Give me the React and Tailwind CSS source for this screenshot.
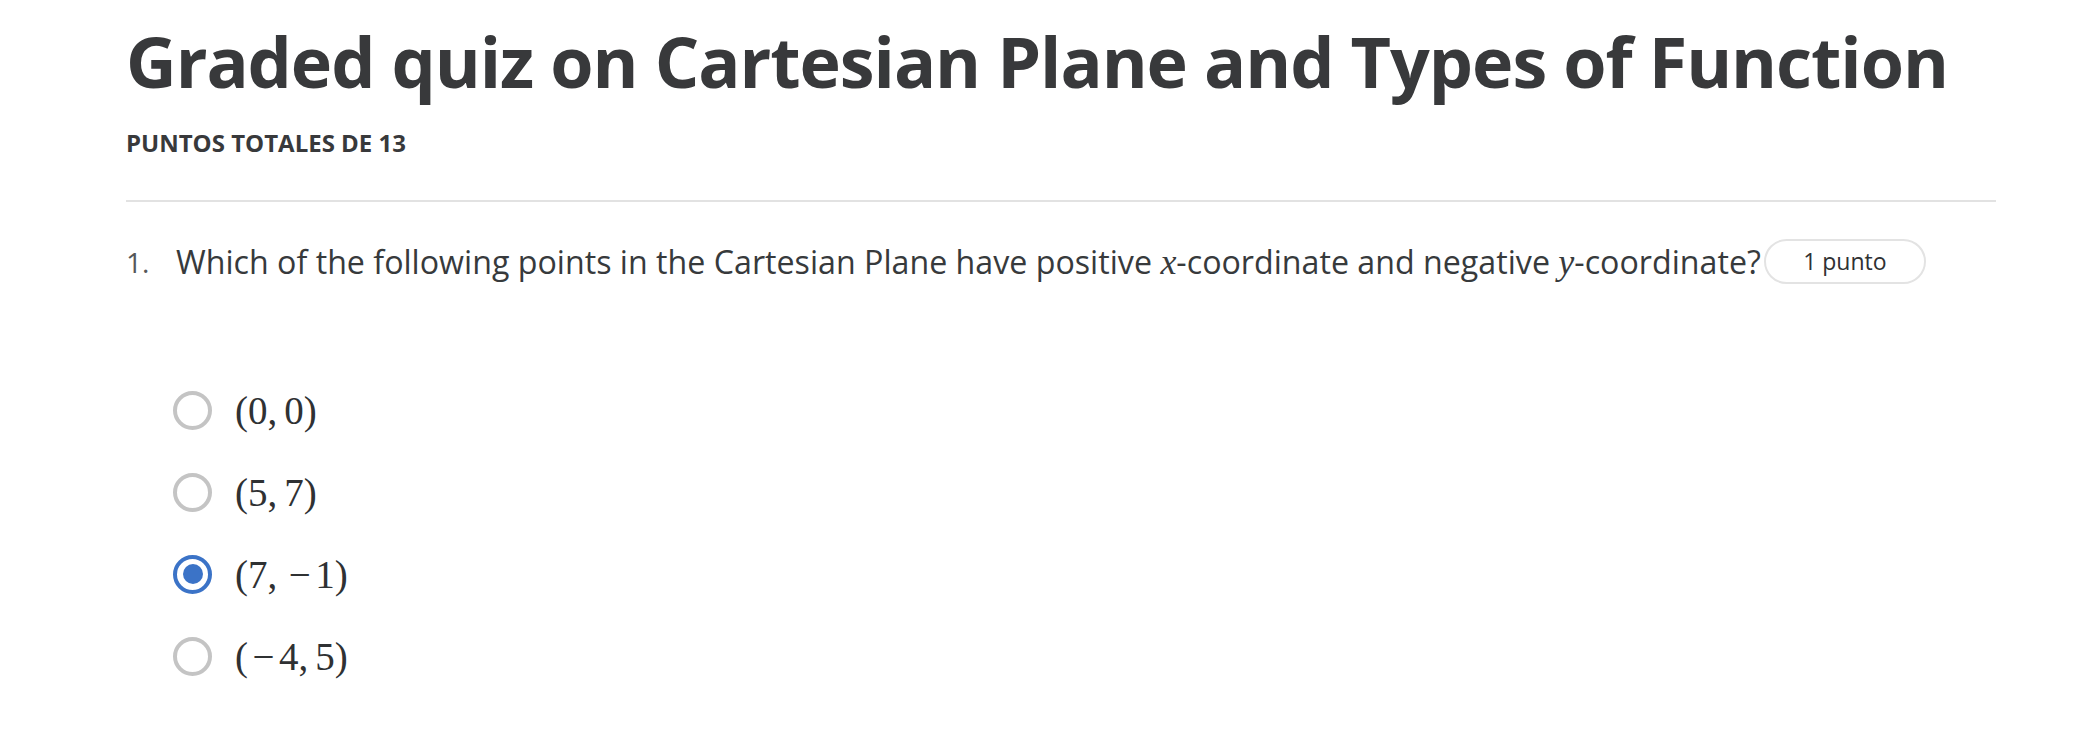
import React from "react";

const options = [
    { id: "a", a: "0", b: "0", selected: false },
    { id: "b", a: "5", b: "7", selected: false },
    { id: "c", a: "7", b: "-1", selected: true },
    { id: "d", a: "-4", b: "5", selected: false },
];

function Num({ value }) {
    // widen the minus like the math font does
    if (value.startsWith("-")) {
        return (
            <>
                <span className="inline-block w-[31px] text-center">{"\u2212"}</span>
                {value.slice(1)}
            </>
        );
    }
    return value;
}

function MathPair({ a, b }) {
    return (
        <span
            className="text-[39px] leading-none text-[#2f3133]"
            style={{ fontFamily: '"Liberation Serif", "DejaVu Serif", serif' }}>
            (<Num value={a} />,
            <span className="inline-block w-[7px]"></span>
            <Num value={b} />)
        </span>
    );
}

function Radio({ selected }) {
    if (selected) {
        return (
            <span className="w-[39px] h-[39px] rounded-full border-[4px] border-[#3b73c7] bg-white flex items-center justify-center shrink-0">
                <span className="w-[20px] h-[20px] rounded-full bg-[#3b73c7]"></span>
            </span>
        );
    }
    return (
        <span className="w-[39px] h-[39px] rounded-full border-[4px] border-[#c4c4c4] bg-white shrink-0"></span>
    );
}

function MathVar({ children }) {
    return (
        <span
            className="italic text-[36px]"
            style={{ fontFamily: '"Liberation Serif", "DejaVu Serif", serif' }}>
            {children}
        </span>
    );
}

export default function App() {
    return (
        <div
            className="min-h-screen bg-white pl-[126px] pr-[86px] pt-[21px] text-[#373a3c]"
            style={{ fontFamily: '"Open Sans", "Noto Sans", sans-serif' }}>
            <h1 className="text-[70px] leading-[80px] font-bold tracking-[-1.05px] text-[#38393b] whitespace-nowrap">
                Graded quiz on Cartesian Plane and Types of Function
            </h1>
            <p className="mt-[26px] text-[24px] leading-[32px] font-bold uppercase text-[#38393b]">
                Puntos totales de 13
            </p>

            <div className="mt-[41px] h-[2px] bg-[#e2e2e2]"></div>

            <div className="mt-[37px] flex items-center h-[45px] whitespace-nowrap">
                <span className="w-[50px] text-[28px] leading-[44px] text-[#555759]">1.</span>
                <span className="text-[32.2px] leading-[44px]">
                    Which of the following points in the Cartesian Plane have positive{" "}
                    <MathVar>x</MathVar>-coordinate and negative <MathVar>y</MathVar>
                    -coordinate?
                </span>
                <span className="ml-[3px] h-[45px] w-[162px] rounded-full border-2 border-[#e3e3e3] flex items-center justify-center text-[23px] text-[#2f3133]">
                    1 punto
                </span>
            </div>

            <div className="mt-[85px] pl-[47px] flex flex-col">
                {options.map((opt) => (
                    <label key={opt.id} className="h-[82px] flex items-center gap-[23px]">
                        <Radio selected={opt.selected} />
                        <MathPair a={opt.a} b={opt.b} />
                    </label>
                ))}
            </div>
        </div>
    );
}
